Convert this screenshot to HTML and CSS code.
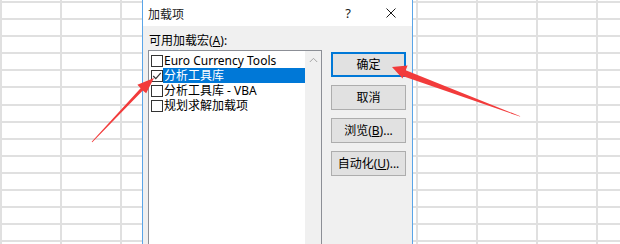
FILE: index.html
```html
<!DOCTYPE html>
<html>
<head>
<meta charset="utf-8">
<link rel="stylesheet" href="styles.css">
</head>
<body>
<div class="page">
  <div class="dialog">
    <div class="titlebar">
      <span class="title">加载项</span>
      <span class="help">?</span>
      <span class="close">
        <svg width="10" height="10" viewBox="0 0 10 10"><path d="M0.5 0.5 L9.5 9.5 M9.5 0.5 L0.5 9.5" stroke="#1a1a1a" stroke-width="1" fill="none"/></svg>
      </span>
    </div>
    <div class="dlg-body">
      <div class="left-col">
        <div class="label">可用加载宏(<u>A</u>):</div>
        <div class="listbox">
          <div class="items">
            <div class="item"><span class="cb"></span><span class="txt">Euro Currency Tools</span></div>
            <div class="item sel"><span class="cb"><svg width="10" height="10" viewBox="0 0 10 10"><polyline points="1.2,5 3.8,7.6 8.8,1.8" stroke="#333" stroke-width="1.2" fill="none"/></svg></span><span class="txt">分析工具库</span></div>
            <div class="item"><span class="cb"></span><span class="txt">分析工具库 - VBA</span></div>
            <div class="item"><span class="cb"></span><span class="txt">规划求解加载项</span></div>
          </div>
          <div class="scrollbar">
            <svg width="9" height="6" viewBox="0 0 9 6"><polyline points="0.8,5 4.5,1.3 8.2,5" stroke="#a6a6a6" stroke-width="1" fill="none"/></svg>
          </div>
        </div>
      </div>
      <div class="buttons">
        <button class="btn default">确定</button>
        <button class="btn">取消</button>
        <button class="btn">浏览(<u>B</u>)...</button>
        <button class="btn">自动化(<u>U</u>)...</button>
      </div>
    </div>
  </div>
  <svg class="arrows" width="620" height="244" viewBox="0 0 620 244">
    <polygon fill="#f23b3b" points="154,78 146.2,93.2 142.8,90.4 92.3,142.3 91.7,141.7 140.6,88.2 137.4,84.8"/>
    <polygon fill="#f23b3b" points="392,67 407.6,65.5 405.7,70.3 520.3,116.2 519.9,116.6 403.2,76.3 402.6,78.5"/>
  </svg>
</div>
</body>
</html>
```

FILE: styles.css
```css
* { box-sizing: border-box; }
html, body { margin: 0; padding: 0; }
body {
  font-family: "Noto Sans", "Noto Sans CJK SC", sans-serif;
  font-size: 12px;
  color: #000;
}
.page {
  position: relative;
  width: 620px;
  height: 244px;
  overflow: hidden;
  display: flex;
  padding-left: 142px;
  background-color: #fff;
  background-image:
    repeating-linear-gradient(to bottom, #e0e0e0 0 2px, transparent 2px 17.1px),
    repeating-linear-gradient(to right, #e0e0e0 0 2px, transparent 2px 60px),
    repeating-linear-gradient(to right, #e0e0e0 0 2px, transparent 2px 60px);
  background-size: 100% 100%, 142px 100%, 203px 100%;
  background-position: 0 0.5px, 0 0, 416px 0;
  background-repeat: no-repeat;
}
.dialog {
  width: 271px;
  height: 244px;
  border-left: 1px solid #5aa5e8;
  border-right: 1px solid #5aa5e8;
  background: #f0f0f0;
  display: flex;
  flex-direction: column;
}
.titlebar {
  height: 26px;
  background: #fff;
  display: flex;
  align-items: center;
  padding-left: 5px;
}
.title {
  flex: 1;
  font-family: "Noto Sans CJK SC", sans-serif;
  font-size: 12px;
  color: #1a1a1a;
}
.help {
  width: 30px;
  text-align: center;
  font-size: 13px;
  color: #1a1a1a;
  margin-right: 7px;
}
.close {
  width: 42px;
  height: 26px;
  display: flex;
  align-items: center;
  justify-content: center;
}
.close svg { display: block; }
.dlg-body {
  flex: 1;
  display: flex;
  padding: 7px 6px 0 5px;
  gap: 9px;
}
.left-col {
  width: 174px;
  display: flex;
  flex-direction: column;
}
.label {
  height: 16px;
  line-height: 16px;
  margin-bottom: 1px;
  padding-left: 1px;
  white-space: nowrap;
}
.listbox {
  height: 200px;
  border: 1px solid #8c8f96;
  background: #fff;
  display: flex;
}
.items {
  flex: 1;
  padding-top: 2px;
}
.item {
  height: 15px;
  display: flex;
  align-items: center;
}
.cb {
  width: 12px;
  height: 12px;
  margin-left: 2px;
  border: 1px solid #333;
  background: #fff;
  display: flex;
  align-items: center;
  justify-content: center;
  flex: none;
}
.cb svg { display: block; }
.txt {
  flex: 1;
  height: 15px;
  line-height: 15px;
  padding-left: 1px;
  white-space: nowrap;
  overflow: hidden;
}
.item.sel .txt {
  background: #0078d7;
  color: #fff;
}
.scrollbar {
  width: 16px;
  background: #f0f0f0;
  display: flex;
  justify-content: center;
  padding-top: 6px;
}
.scrollbar svg { display: block; }
.buttons {
  width: 75px;
  display: flex;
  flex-direction: column;
  gap: 8px;
  padding-top: 19px;
}
.btn {
  width: 75px;
  height: 25px;
  margin: 0;
  padding: 0;
  border: 1px solid #adadad;
  background: #e1e1e1;
  font-family: "Noto Sans", "Noto Sans CJK SC", sans-serif;
  font-size: 12px;
  color: #000;
  line-height: 23px;
  text-align: center;
}
.btn.default {
  border: 1px solid #0078d7;
  box-shadow: inset 0 0 0 1px #0078d7;
}
.arrows {
  position: absolute;
  left: 0;
  top: 0;
  pointer-events: none;
}
```
